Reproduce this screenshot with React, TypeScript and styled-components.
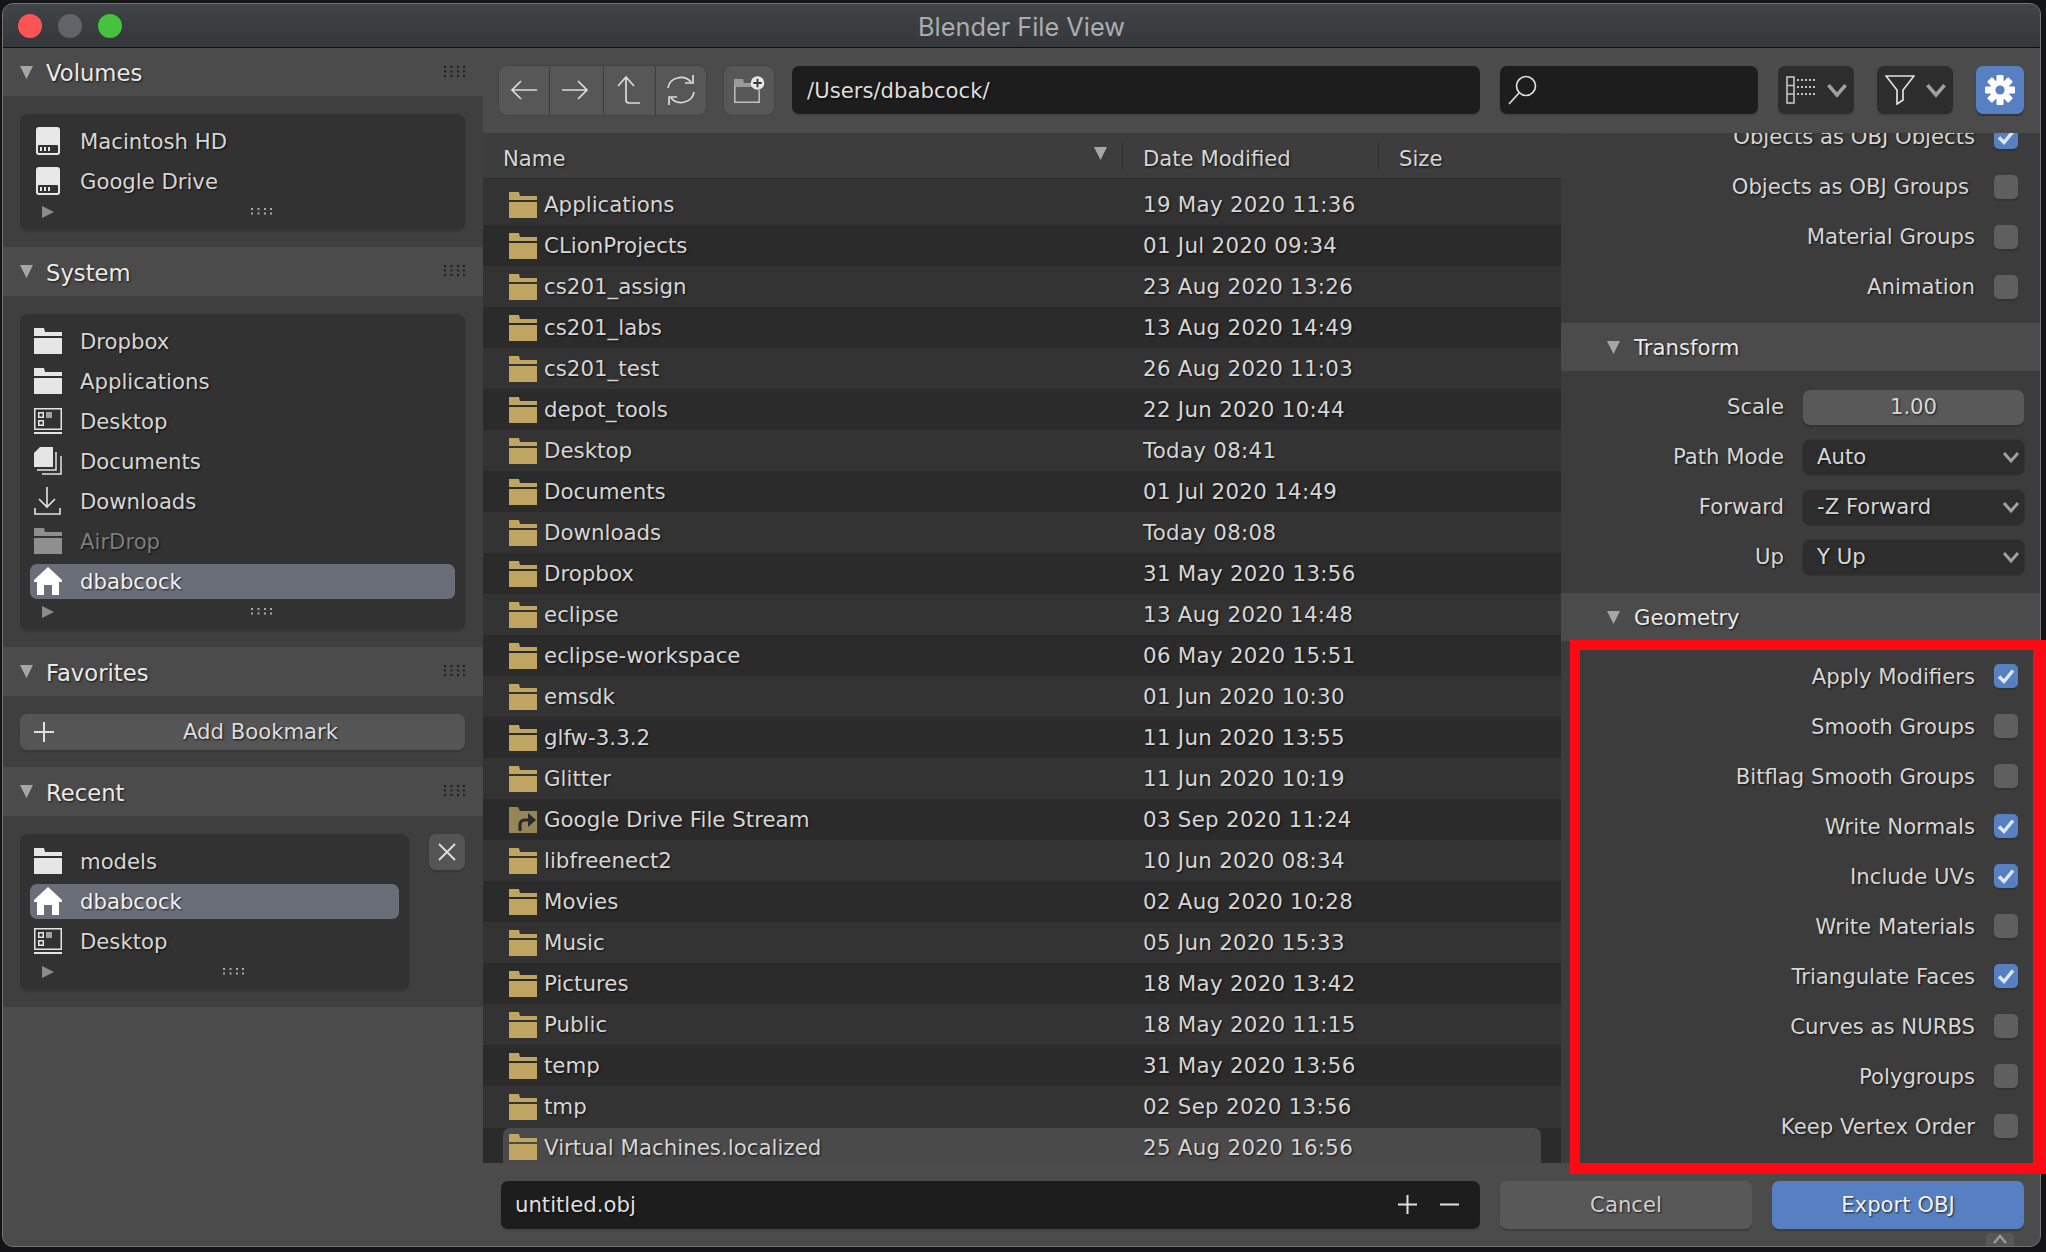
import React from "react";
import styled, { createGlobalStyle } from "styled-components";

const GlobalStyle = createGlobalStyle`
  html, body { margin: 0; padding: 0; background: #141416; }
  * { box-sizing: border-box; }
`;

const Page = styled.div`
  position: relative;
  width: 2046px;
  height: 1252px;
  overflow: hidden;
  padding: 3px 0 0 2px;
  font-family: "DejaVu Sans", sans-serif;
  font-size: 21.2px;
  color: #d6d6d6;
  text-shadow: 1px 1px 2px rgba(0, 0, 0, 0.75);
`;

const Window = styled.div`
  width: 2039px;
  height: 1244px;
  display: flex;
  flex-direction: column;
  border: 1px solid #747474;
  border-radius: 11px;
  overflow: hidden;
  background: #4b4b4b;
`;

const TitleBar = styled.div`
  height: 44px;
  flex: none;
  display: flex;
  align-items: center;
  padding-left: 15px;
  gap: 16px;
  position: relative;
  background: linear-gradient(#414446, #35383b);
  border-bottom: 1px solid #111;
`;

const Light = styled.span<{ $color: string }>`
  width: 24px;
  height: 24px;
  border-radius: 50%;
  background: ${(p) => p.$color};
`;

const Title = styled.div`
  position: absolute;
  left: 0;
  right: 0;
  top: 8px;
  text-align: center;
  font-family: Inter, "Liberation Sans", sans-serif;
  color: #a9adb1;
  font-size: 25.3px;
  line-height: 30px;
  text-shadow: none;
`;

const Main = styled.div`
  flex: 1;
  display: flex;
  min-height: 0;
`;

const Sidebar = styled.div`
  width: 480px;
  flex: none;
  background: #4b4b4b;
`;

const SectionHead = styled.div`
  height: 49px;
  display: flex;
  align-items: center;
  padding: 0 18px 0 17px;
  font-size: 22.7px;
  color: #eaeaea;
  background: #4b4b4b;
  &:first-child { height: 48px; }
`;

const SectionName = styled.span`
  margin-left: 13px;
  padding-top: 2px;
  flex: 1;
`;

const SectionBody = styled.div`
  padding: 18px 18px 17px 17px;
  background: #3f3f3f;
  display: flex;
  gap: 20px;
  align-items: flex-start;
`;

const ListBox = styled.div`
  flex: 1;
  display: flex;
  flex-direction: column;
  gap: 5px;
  padding: 9.5px 10px 10.5px;
  border-radius: 7px;
  background: #323232;
  box-shadow: 0 2px 1px #383838;
`;

const PlaceRow = styled.div<{ $active?: boolean; $dim?: boolean }>`
  height: 35px;
  display: flex;
  align-items: center;
  padding-left: 4px;
  gap: 18px;
  border-radius: 7px;
  background: ${(p) => (p.$active ? "#696e78" : "transparent")};
  color: ${(p) => (p.$dim ? "#7d7d7d" : p.$active ? "#f2f2f2" : "#d6d6d6")};
`;

const IconSlot = styled.span`
  width: 28px;
  height: 28px;
  flex: none;
  display: flex;
  align-items: center;
  justify-content: center;
`;

const ListFooter = styled.div`
  height: 16px;
  position: relative;
  display: flex;
  align-items: center;
  justify-content: center;
  padding-left: 38px;
`;

const ExpandArrow = styled.svg`
  position: absolute;
  left: 12px;
  top: 2px;
`;

const AddButton = styled.div`
  flex: 1;
  height: 36px;
  border-radius: 7px;
  background: #555;
  box-shadow: 0 2px 1px #383838;
  position: relative;
  display: flex;
  align-items: center;
  justify-content: center;
  padding: 0 0 2px 36px;
  color: #dcdcdc;
`;

const AddPlus = styled.svg`
  position: absolute;
  left: 14px;
  top: 8px;
`;

const SquareButton = styled.div`
  width: 36px;
  height: 36px;
  flex: none;
  border-radius: 7px;
  background: #555;
  box-shadow: 0 2px 1px #383838;
  display: flex;
  align-items: center;
  justify-content: center;
`;

const Content = styled.div`
  flex: 1;
  min-width: 0;
  display: flex;
  flex-direction: column;
`;

const Toolbar = styled.div`
  height: 85px;
  flex: none;
  display: flex;
  align-items: center;
  padding: 0 16px 1px;
  background: #4b4b4b;
`;

const NavGroup = styled.div`
  width: 207px;
  height: 49px;
  display: flex;
  border-radius: 8px;
  overflow: hidden;
  background: #575757;
  box-shadow: 0 0 0 1px #444;
`;

const NavButton = styled.div<{ $shift?: number }>`
  flex: 1;
  display: flex;
  align-items: center;
  justify-content: center;
  padding-right: ${(p) => p.$shift ?? 0}px;
  border-left: 1px solid #3e3e3e;
  &:first-child { border-left: none; }
`;

const FolderButton = styled.div`
  width: 50px;
  height: 49px;
  margin: 0 18px;
  border-radius: 8px;
  background: #575757;
  box-shadow: 0 0 0 1px #444;
  display: flex;
  align-items: center;
  justify-content: center;
`;

const TextField = styled.div<{ $width?: number; $grow?: boolean }>`
  height: 48px;
  flex: ${(p) => (p.$grow ? "1" : "none")};
  width: ${(p) => (p.$width ? `${p.$width}px` : "auto")};
  display: flex;
  align-items: center;
  padding: 0 15px;
  border-radius: 7px;
  background: #1d1d1d;
  box-shadow: 0 2px 1px #444;
  color: #dedede;
`;

const SearchField = styled(TextField)`
  margin: 0 20px;
  padding: 0 8px;
`;

const ModeSelect = styled.div<{ $gap?: number }>`
  width: 76px;
  height: 48px;
  margin-right: ${(p) => p.$gap ?? 0}px;
  flex: none;
  display: flex;
  align-items: center;
  justify-content: space-between;
  padding: 0 6px 0 8px;
  border-radius: 7px;
  background: #2d2d2d;
  box-shadow: 0 2px 1px #444;
`;

const GearButton = styled.div`
  width: 48px;
  height: 48px;
  flex: none;
  border-radius: 7px;
  background: #5680c2;
  box-shadow: 0 2px 1px #333;
  display: flex;
  align-items: center;
  justify-content: center;
`;

const Middle = styled.div`
  flex: 1;
  min-height: 0;
  display: flex;
`;

const FileColumn = styled.div`
  width: 1078px;
  flex: none;
  display: flex;
  flex-direction: column;
  background: #333;
`;

const ColumnHead = styled.div`
  height: 46px;
  flex: none;
  display: grid;
  grid-template-columns: 639px 256px 1fr;
  align-items: center;
  background: #3d3d3d;
  border-bottom: 1px solid #2e2e2e;
  position: relative;
`;

const ColumnLabel = styled.div<{ $divider?: boolean }>`
  height: 30px;
  display: flex;
  align-items: center;
  padding: 6px 0 0 20px;
  border-left: ${(p) => (p.$divider ? "1px solid #2f2f2f" : "none")};
  position: relative;
`;

const SortArrow = styled.svg`
  position: absolute;
  right: 15px;
  top: 6px;
`;

const FileRows = styled.div`
  flex: 1;
  min-height: 0;
  overflow: hidden;
  padding-top: 5px;
  font-size: 21.35px;
`;

const FileRow = styled.div<{ $odd: boolean }>`
  height: 41px;
  padding: 0 20px;
  background: ${(p) => (p.$odd ? "#2b2b2b" : "#333")};
`;

const FileCell = styled.div<{ $hover?: boolean }>`
  height: 100%;
  margin-top: ${(p) => (p.$hover ? "1px" : "0")};
  padding-bottom: ${(p) => (p.$hover ? "3px" : "0")};
  display: grid;
  grid-template-columns: 634px 1fr;
  align-items: center;
  padding-left: 6px;
  border-radius: 7px 7px 0 0;
  background: ${(p) => (p.$hover ? "#4a4a4a" : "transparent")};
`;

const FileName = styled.div`
  display: flex;
  align-items: center;
  gap: 7px;
`;

const FileDate = styled.span`
  letter-spacing: 0.3px;
`;

const Options = styled.div`
  flex: 1;
  min-width: 0;
  overflow: hidden;
  background: #3c3c3c;
`;

const OptionGroup = styled.div<{ $top: number; $bottom: number }>`
  margin-top: ${(p) => (p.$top < 0 ? p.$top : 0)}px;
  padding-top: ${(p) => (p.$top > 0 ? p.$top : 0)}px;
  padding-bottom: ${(p) => p.$bottom}px;
`;

const CheckRow = styled.div`
  height: 50px;
  display: flex;
  align-items: center;
  justify-content: flex-end;
  padding-right: 22px;
`;

const CheckLabel = styled.span<{ $inset?: number; $lift?: number }>`
  margin-right: ${(p) => 19 + (p.$inset ?? 0)}px;
  padding-bottom: ${(p) => p.$lift ?? 0}px;
`;

const CheckBox = styled.div<{ $on?: boolean }>`
  width: 24px;
  height: 24px;
  border-radius: 5px;
  background: ${(p) => (p.$on ? "#5680c2" : "#5f5f5f")};
  box-shadow: 0 2px 1px #333;
  display: flex;
  align-items: center;
  justify-content: center;
`;

const OptionHead = styled.div`
  height: 48px;
  display: flex;
  align-items: center;
  padding-left: 46px;
  background: #4b4b4b;
  color: #eaeaea;
`;

const OptionHeadName = styled.span`
  margin-left: 14px;
`;

const FormGroup = styled.div`
  display: flex;
  flex-direction: column;
  gap: 15px;
  padding: 19px 16px 18px 0;
`;

const FormRow = styled.div`
  display: flex;
  align-items: center;
  justify-content: flex-end;
  gap: 19px;
`;

const FormLabel = styled.span`
  padding-bottom: 2px;
`;

const NumberField = styled.div`
  width: 221px;
  height: 35px;
  border-radius: 7px;
  background: #595959;
  box-shadow: 0 2px 1px #333;
  display: flex;
  align-items: center;
  justify-content: center;
  padding-bottom: 2px;
`;

const SelectField = styled.div`
  width: 221px;
  height: 35px;
  border-radius: 7px;
  background: #2d2d2d;
  box-shadow: 0 0 0 1px #343434;
  display: flex;
  align-items: center;
  justify-content: space-between;
  padding: 0 4px 2px 14px;
`;

const BottomBar = styled.div`
  height: 83px;
  flex: none;
  display: flex;
  align-items: flex-start;
  gap: 20px;
  padding: 18px 16px 0 18px;
  background: #4b4b4b;
  position: relative;
`;

const NameInput = styled(TextField)`
  justify-content: space-between;
  padding: 0 21px 2px 14px;
`;

const NameActions = styled.span`
  display: flex;
  gap: 23px;
  align-items: center;
`;

const ActionButton = styled.div<{ $primary?: boolean }>`
  width: 252px;
  height: 48px;
  flex: none;
  border-radius: 7px;
  background: ${(p) => (p.$primary ? "#5680c2" : "#585858")};
  color: ${(p) => (p.$primary ? "#f4f4f4" : "#d0d0d0")};
  box-shadow: 0 2px 1px #3d3d3d;
  display: flex;
  align-items: center;
  justify-content: center;
  padding-bottom: 2px;
`;

const ScrollTab = styled.div`
  position: absolute;
  right: 26px;
  bottom: 0;
  width: 28px;
  height: 13px;
  border-radius: 4px 4px 0 0;
  background: #575757;
  display: flex;
  justify-content: center;
`;

const RedFrame = styled.div`
  position: absolute;
  left: 1570px;
  top: 640px;
  width: 476px;
  height: 534px;
  border-style: solid;
  border-color: #ff0a14;
  border-width: 10px 13px 11px 10px;
`;

const Triangle = ({ size = 13 }: { size?: number }) => (
  <svg width={size} height={size} viewBox="0 0 13 13">
    <polygon points="0,0 13,0 6.5,13" fill="#a6a6a6" />
  </svg>
);

const Grip = ({ rows, color }: { rows: number; color: string }) => (
  <svg width="21" height={rows * 5} viewBox={`0 0 21 ${rows * 5}`}>
    {Array.from({ length: rows }).flatMap((_, r) =>
      [0, 6.5, 13, 19].map((x) => (
        <rect key={`${r}-${x}`} x={x} y={r * 4.5 + 1} width="2" height="2" fill={color} />
      ))
    )}
  </svg>
);

const FolderGlyph = ({ color }: { color: string }) => (
  <svg width="28" height="26" viewBox="0 0 28 26" fill={color}>
    <path d="M0 0H10L11 4H28V8H0Z" />
    <rect y="10" width="28" height="16" />
  </svg>
);

const LinkFolderGlyph = () => (
  <svg width="28" height="26" viewBox="0 0 28 26">
    <path fill="#968557" d="M0 0H9L11 4H28V26H0Z" />
    <path fill="none" stroke="#2b2b2b" strokeWidth="3.2" d="M11 24V18Q11 13 16 13H22" />
    <polygon fill="#2b2b2b" points="19,6 27,13 19,20" />
  </svg>
);

const DriveGlyph = () => (
  <svg width="24" height="28" viewBox="0 0 24 28">
    <path fill="#e8e8e8" d="M3 0H21Q24 0 24 3V25Q24 28 21 28H3Q0 28 0 25V3Q0 0 3 0Z" />
    <rect x="2" y="18" width="20" height="8" rx="1" fill="#323232" />
    <rect x="4" y="20" width="2" height="4" fill="#e8e8e8" />
    <rect x="8" y="20" width="2" height="4" fill="#e8e8e8" />
    <rect x="12" y="20" width="2" height="4" fill="#e8e8e8" />
  </svg>
);

const DesktopGlyph = () => (
  <svg width="28" height="26" viewBox="0 0 28 26">
    <rect x="0.75" y="0.75" width="26.5" height="20.5" fill="none" stroke="#e4e4e4" strokeWidth="1.5" />
    <rect y="24" width="28" height="2" fill="#e4e4e4" />
    <rect x="4.75" y="4.75" width="4.5" height="4.5" fill="none" stroke="#e4e4e4" strokeWidth="1.5" />
    <rect x="4.75" y="12.75" width="4.5" height="4.5" fill="none" stroke="#e4e4e4" strokeWidth="1.5" />
    <rect x="12" y="4" width="6" height="6" fill="#a0a0a0" />
  </svg>
);

const DocumentsGlyph = () => (
  <svg width="28" height="28" viewBox="0 0 28 28" fill="none">
    <path fill="#e4e4e4" d="M6 0H19V20H0V6Z" />
    <path stroke="#e4e4e4" strokeWidth="1.5" d="M22 5V23H3" />
    <path stroke="#e4e4e4" strokeWidth="1.5" d="M27 9V27H8" />
  </svg>
);

const DownloadGlyph = () => (
  <svg width="28" height="28" viewBox="0 0 28 28" fill="none" stroke="#e4e4e4" strokeWidth="1.6">
    <path d="M13 0V20" />
    <path d="M5 12L13 20L21 12" />
    <path d="M1 21V27H26V21" />
  </svg>
);

const HomeGlyph = () => (
  <svg width="28" height="28" viewBox="0 0 28 28">
    <path fill="#fff" d="M14 0L28 13V15H25V28H18V18H10V28H3V15H0V13Z" />
  </svg>
);

const Check = ({ size = 18 }: { size?: number }) => (
  <svg width={size} height={size} viewBox="0 0 18 18" fill="none">
    <path d="M2 9.5L7 14.5L16 3.5" stroke="#dfe7f5" strokeWidth="3.4" />
  </svg>
);

const Chevron = ({ w = 18, stroke = 3 }: { w?: number; stroke?: number }) => (
  <svg width={w} height={w} viewBox="0 0 18 18" fill="none">
    <path d="M2 5L9 13L16 5" stroke="#a0a0a0" strokeWidth={stroke} />
  </svg>
);

const toolStroke = { fill: "none", stroke: "#dcdcdc", strokeWidth: 1.7 };

const BackIcon = () => (
  <svg width="28" height="22" viewBox="0 0 28 22" {...toolStroke}>
    <path d="M27 11H2M11 2L2 11L11 20" />
  </svg>
);

const ForwardIcon = () => (
  <svg width="28" height="22" viewBox="0 0 28 22" {...toolStroke}>
    <path d="M1 11H26M17 2L26 11L17 20" />
  </svg>
);

const UpIcon = () => (
  <svg width="26" height="30" viewBox="0 0 26 30" {...toolStroke}>
    <path d="M11 2V25Q11 28 14 28H25M3 11L11 2L19 11" />
  </svg>
);

const RefreshIcon = () => (
  <svg width="30" height="32" viewBox="0 0 30 32" {...toolStroke}>
    <path d="M2 14A13 12 0 0 1 25 8M27 1V9H19" />
    <path d="M28 18A13 12 0 0 1 5 24M3 31V23H11" />
  </svg>
);

const NewFolderIcon = () => (
  <svg width="32" height="28" viewBox="0 0 32 28">
    <path fill="#9a9a9a" d="M1 3H10L11 7H20V11H1Z" />
    <path fill="none" stroke="#c0c0c0" strokeWidth="1.5" d="M1.8 10V26.2H26.2V14" />
    <circle cx="24.5" cy="7" r="6.8" fill="#e8e8e8" />
    <path d="M24.5 2.8V11.2M20.3 7H28.7" stroke="#3a3a3a" strokeWidth="1.9" />
  </svg>
);

const SearchIcon = () => (
  <svg width="30" height="30" viewBox="0 0 30 30" {...toolStroke}>
    <circle cx="18" cy="11" r="9.5" />
    <path d="M11 18L1 29" />
  </svg>
);

const DisplayIcon = () => (
  <svg width="30" height="28" viewBox="0 0 30 28">
    <rect x="1" y="1" width="7" height="26" fill="none" stroke="#c4c4c4" strokeWidth="1.6" />
    <path d="M1 9.5H8M1 18H8" stroke="#c4c4c4" strokeWidth="1.6" />
    {[3, 10, 17].flatMap((y) =>
      [11, 15, 19, 23, 27].map((x) => <rect key={`${x}-${y}`} x={x} y={y} width="2" height="2" fill="#c4c4c4" />)
    )}
  </svg>
);

const FilterIcon = () => (
  <svg width="30" height="30" viewBox="0 0 30 30" fill="none" stroke="#e0e0e0" strokeWidth="1.7">
    <path d="M1 1H29L18 15V25L12 29V15Z" />
  </svg>
);

const GearIcon = () => (
  <svg width="30" height="30" viewBox="0 0 30 30">
    <g fill="#fff">
      {[0, 45, 90, 135].map((a) => (
        <rect key={a} x="11.5" y="0" width="7" height="30" rx="1" transform={`rotate(${a} 15 15)`} />
      ))}
    </g>
    <circle cx="15" cy="15" r="10" fill="#fff" />
    <circle cx="15" cy="15" r="4.6" fill="#5680c2" />
  </svg>
);

const CloseIcon = () => (
  <svg width="18" height="18" viewBox="0 0 18 18" fill="none" stroke="#e0e0e0" strokeWidth="1.8">
    <path d="M1 1L17 17M17 1L1 17" />
  </svg>
);

const Plus = ({ size = 19 }: { size?: number }) => (
  <svg width={size} height={size} viewBox="0 0 18 18" fill="none" stroke="#e0e0e0" strokeWidth="1.9">
    <path d="M9 0V18M0 9H18" />
  </svg>
);

const Minus = () => (
  <svg width="19" height="19" viewBox="0 0 18 18" fill="none" stroke="#e0e0e0" strokeWidth="1.9">
    <path d="M0 9H18" />
  </svg>
);

const placeIcon = {
  drive: <DriveGlyph />,
  folder: <FolderGlyph color="#e6e6e6" />,
  dim: <FolderGlyph color="#8f8f8f" />,
  desktop: <DesktopGlyph />,
  docs: <DocumentsGlyph />,
  down: <DownloadGlyph />,
  home: <HomeGlyph />,
};

type Place = { name: string; icon: keyof typeof placeIcon; active?: boolean };

const volumes: Place[] = [
  { name: "Macintosh HD", icon: "drive" },
  { name: "Google Drive", icon: "drive" },
];

const system: Place[] = [
  { name: "Dropbox", icon: "folder" },
  { name: "Applications", icon: "folder" },
  { name: "Desktop", icon: "desktop" },
  { name: "Documents", icon: "docs" },
  { name: "Downloads", icon: "down" },
  { name: "AirDrop", icon: "dim" },
  { name: "dbabcock", icon: "home", active: true },
];

const recent: Place[] = [
  { name: "models", icon: "folder" },
  { name: "dbabcock", icon: "home", active: true },
  { name: "Desktop", icon: "desktop" },
];

const files = [
  ["Applications", "19 May 2020 11:36"],
  ["CLionProjects", "01 Jul 2020 09:34"],
  ["cs201_assign", "23 Aug 2020 13:26"],
  ["cs201_labs", "13 Aug 2020 14:49"],
  ["cs201_test", "26 Aug 2020 11:03"],
  ["depot_tools", "22 Jun 2020 10:44"],
  ["Desktop", "Today 08:41"],
  ["Documents", "01 Jul 2020 14:49"],
  ["Downloads", "Today 08:08"],
  ["Dropbox", "31 May 2020 13:56"],
  ["eclipse", "13 Aug 2020 14:48"],
  ["eclipse-workspace", "06 May 2020 15:51"],
  ["emsdk", "01 Jun 2020 10:30"],
  ["glfw-3.3.2", "11 Jun 2020 13:55"],
  ["Glitter", "11 Jun 2020 10:19"],
  ["Google Drive File Stream", "03 Sep 2020 11:24"],
  ["libfreenect2", "10 Jun 2020 08:34"],
  ["Movies", "02 Aug 2020 10:28"],
  ["Music", "05 Jun 2020 15:33"],
  ["Pictures", "18 May 2020 13:42"],
  ["Public", "18 May 2020 11:15"],
  ["temp", "31 May 2020 13:56"],
  ["tmp", "02 Sep 2020 13:56"],
  ["Virtual Machines.localized", "25 Aug 2020 16:56"],
];

const includeOptions: [string, boolean, number?][] = [
  ["Objects as OBJ Objects", true],
  ["Objects as OBJ Groups", false, 6],
  ["Material Groups", false],
  ["Animation", false],
];

const geometryOptions: [string, boolean][] = [
  ["Apply Modifiers", true],
  ["Smooth Groups", false],
  ["Bitflag Smooth Groups", false],
  ["Write Normals", true],
  ["Include UVs", true],
  ["Write Materials", false],
  ["Triangulate Faces", true],
  ["Curves as NURBS", false],
  ["Polygroups", false],
  ["Keep Vertex Order", false],
];

const PlaceList = ({ items }: { items: Place[] }) => (
  <ListBox>
    {items.map((item) => (
      <PlaceRow key={item.name} $active={item.active} $dim={item.icon === "dim"}>
        <IconSlot>{placeIcon[item.icon]}</IconSlot>
        <span>{item.name}</span>
      </PlaceRow>
    ))}
    <ListFooter>
      <ExpandArrow width="12" height="12" viewBox="0 0 12 12">
        <polygon points="0,0 12,6 0,12" fill="#8c8c8c" />
      </ExpandArrow>
      <Grip rows={2} color="#a8a8a8" />
    </ListFooter>
  </ListBox>
);

const Section = ({ name, children }: { name: string; children: React.ReactNode }) => (
  <>
    <SectionHead>
      <Triangle />
      <SectionName>{name}</SectionName>
      <Grip rows={3} color="#1e1e1e" />
    </SectionHead>
    <SectionBody>{children}</SectionBody>
  </>
);

const OptionCheck = ({ label, on, inset, lift }: { label: string; on: boolean; inset?: number; lift?: number }) => (
  <CheckRow>
    <CheckLabel $inset={inset} $lift={lift}>{label}</CheckLabel>
    <CheckBox $on={on}>{on && <Check />}</CheckBox>
  </CheckRow>
);

export default function App() {
  return (
    <Page>
      <GlobalStyle />
      <Window>
        <TitleBar>
          <Light $color="#fc5454" />
          <Light $color="#606468" />
          <Light $color="#45c23e" />
          <Title>Blender File View</Title>
        </TitleBar>
        <Main>
          <Sidebar>
            <Section name="Volumes">
              <PlaceList items={volumes} />
            </Section>
            <Section name="System">
              <PlaceList items={system} />
            </Section>
            <Section name="Favorites">
              <AddButton>
                <AddPlus width="20" height="20" viewBox="0 0 18 18" fill="none" stroke="#e0e0e0" strokeWidth="1.8">
                  <path d="M9 0V18M0 9H18" />
                </AddPlus>
                Add Bookmark
              </AddButton>
            </Section>
            <Section name="Recent">
              <PlaceList items={recent} />
              <SquareButton>
                <CloseIcon />
              </SquareButton>
            </Section>
          </Sidebar>
          <Content>
            <Toolbar>
              <NavGroup>
                <NavButton><BackIcon /></NavButton>
                <NavButton $shift={3}><ForwardIcon /></NavButton>
                <NavButton $shift={2}><UpIcon /></NavButton>
                <NavButton><RefreshIcon /></NavButton>
              </NavGroup>
              <FolderButton><NewFolderIcon /></FolderButton>
              <TextField $grow>/Users/dbabcock/</TextField>
              <SearchField $width={258}><SearchIcon /></SearchField>
              <ModeSelect $gap={23}>
                <DisplayIcon />
                <Chevron w={22} />
              </ModeSelect>
              <ModeSelect $gap={23}>
                <FilterIcon />
                <Chevron w={22} />
              </ModeSelect>
              <GearButton><GearIcon /></GearButton>
            </Toolbar>
            <Middle>
              <FileColumn>
                <ColumnHead>
                  <ColumnLabel>
                    Name
                    <SortArrow width="13" height="13" viewBox="0 0 13 13">
                      <polygon points="0,0 13,0 6.5,13" fill="#a6a6a6" />
                    </SortArrow>
                  </ColumnLabel>
                  <ColumnLabel $divider>Date Modified</ColumnLabel>
                  <ColumnLabel $divider>Size</ColumnLabel>
                </ColumnHead>
                <FileRows>
                  {files.map(([name, date], i) => (
                    <FileRow key={name} $odd={i % 2 === 1}>
                      <FileCell $hover={i === files.length - 1}>
                        <FileName>
                          {name === "Google Drive File Stream" ? <LinkFolderGlyph /> : <FolderGlyph color="#c0a562" />}
                          {name}
                        </FileName>
                        <FileDate>{date}</FileDate>
                      </FileCell>
                    </FileRow>
                  ))}
                </FileRows>
              </FileColumn>
              <Options>
                <OptionGroup $top={-21} $bottom={11}>
                  {includeOptions.map(([label, on, inset]) => (
                    <OptionCheck key={label} label={label} on={on} inset={inset} lift={2} />
                  ))}
                </OptionGroup>
                <OptionHead>
                  <Triangle />
                  <OptionHeadName>Transform</OptionHeadName>
                </OptionHead>
                <FormGroup>
                  <FormRow>
                    <FormLabel>Scale</FormLabel>
                    <NumberField>1.00</NumberField>
                  </FormRow>
                  <FormRow>
                    <FormLabel>Path Mode</FormLabel>
                    <SelectField>Auto<Chevron /></SelectField>
                  </FormRow>
                  <FormRow>
                    <FormLabel>Forward</FormLabel>
                    <SelectField>-Z Forward<Chevron /></SelectField>
                  </FormRow>
                  <FormRow>
                    <FormLabel>Up</FormLabel>
                    <SelectField>Y Up<Chevron /></SelectField>
                  </FormRow>
                </FormGroup>
                <OptionHead>
                  <Triangle />
                  <OptionHeadName>Geometry</OptionHeadName>
                </OptionHead>
                <OptionGroup $top={10} $bottom={0}>
                  {geometryOptions.map(([label, on]) => (
                    <OptionCheck key={label} label={label} on={on} />
                  ))}
                </OptionGroup>
              </Options>
            </Middle>
            <BottomBar>
              <NameInput $grow>
                untitled.obj
                <NameActions>
                  <Plus />
                  <Minus />
                </NameActions>
              </NameInput>
              <ActionButton>Cancel</ActionButton>
              <ActionButton $primary>Export OBJ</ActionButton>
              <ScrollTab>
                <svg width="16" height="12" viewBox="0 0 16 12" fill="none">
                  <path d="M2 10L8 3L14 10" stroke="#9c9c9c" strokeWidth="2.4" />
                </svg>
              </ScrollTab>
            </BottomBar>
          </Content>
        </Main>
      </Window>
      <RedFrame />
    </Page>
  );
}
